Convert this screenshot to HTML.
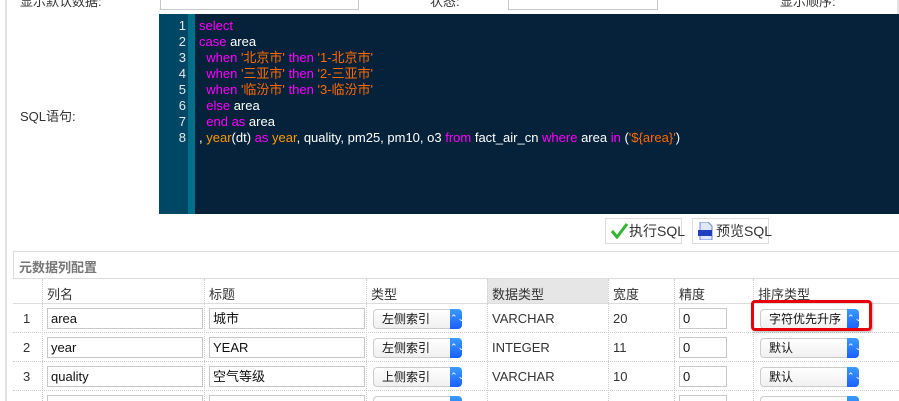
<!DOCTYPE html><html><head><meta charset="utf-8"><style>
*{margin:0;padding:0;box-sizing:border-box}
html,body{width:899px;height:401px;overflow:hidden}
body{background:#fff;position:relative;font-family:"Liberation Sans","Noto Sans CJK SC",sans-serif;font-size:13px;color:#333}
.a{position:absolute;white-space:nowrap}
.ed{left:159px;top:14px;width:740px;height:200px;background:#06223a}
.gut{left:159px;top:14px;width:29px;height:200px;background:#004766}
.bar{left:188px;top:14px;width:7px;height:200px;background:#00708a}
.ln{position:absolute;left:159px;width:27px;text-align:right;color:#e8e8e8;font-size:13px;line-height:16px}
.cl{position:absolute;left:199px;color:#fff;font-size:13px;line-height:16px;white-space:pre}
.k{color:#ff00ff}.s{color:#ff6a00}.f{color:#ff9900}
.btn{border:1px solid #ddd;background:#fff;height:26px;top:218px;font-size:14px;color:#333;line-height:24px}
.inp{border:1px solid #c8c8c8;height:21px;background:#fff;font-size:13px;line-height:19px;padding-left:3px;color:#111}
.sel{border:1px solid #ccc;border-radius:4px;height:20px;background:linear-gradient(#fff,#f0f0f0);font-size:12px;line-height:18px;padding-left:8px;color:#111}
.sel i{position:absolute;right:-1px;top:-1px;width:12px;height:20px;background:linear-gradient(#3a9bff,#1a5fff);border-radius:0 4px 4px 0;color:#fff;font-style:normal;font-size:9px;text-align:center;line-height:18px}
.hl{height:1px;background:#ddd;left:13px;width:886px}
.vd{width:0;border-left:1px dotted #ccc}
.hd{top:284px;font-size:13px;color:#333}
.cell{font-size:13px;color:#333}
</style></head><body>
<div class="a" style="left:5px;top:0;width:2px;height:401px;background:#e2e2e2"></div>
<div class="a" style="left:897px;top:0;width:2px;height:14px;background:#e2e2e2"></div>
<div class="a inp" style="left:160px;top:-12px;width:199px;height:22px"></div>
<div class="a" style="left:20px;top:-9px;font-size:13px">显示默认数据:</div>
<div class="a" style="left:430px;top:-9px;font-size:13px">状态:</div>
<div class="a inp" style="left:508px;top:-12px;width:150px;height:22px"></div>
<div class="a" style="left:780px;top:-9px;font-size:13px">显示顺序:</div>
<div class="a" style="left:20px;top:106px;font-size:13px">SQL语句:</div>
<div class="a ed"></div><div class="a gut"></div><div class="a bar"></div>
<div class="ln" style="top:18px">1</div><div class="ln" style="top:34px">2</div><div class="ln" style="top:50px">3</div><div class="ln" style="top:66px">4</div><div class="ln" style="top:82px">5</div><div class="ln" style="top:98px">6</div><div class="ln" style="top:114px">7</div><div class="ln" style="top:130px">8</div>
<div class="cl" style="top:18px"><span class="k">select</span></div>
<div class="cl" style="top:34px"><span class="k">case</span> area</div>
<div class="cl" style="top:50px">  <span class="k">when</span> <span class="s">'北京市'</span> <span class="k">then</span> <span class="s">'1-北京市'</span></div>
<div class="cl" style="top:66px">  <span class="k">when</span> <span class="s">'三亚市'</span> <span class="k">then</span> <span class="s">'2-三亚市'</span></div>
<div class="cl" style="top:82px">  <span class="k">when</span> <span class="s">'临汾市'</span> <span class="k">then</span> <span class="s">'3-临汾市'</span></div>
<div class="cl" style="top:98px">  <span class="k">else</span> area</div>
<div class="cl" style="top:114px">  <span class="k">end</span> <span class="k">as</span> area</div>
<div class="cl" style="top:130px">, <span class="f">year</span>(dt) <span class="k">as</span> <span class="f">year</span>, quality, pm25, pm10, o3 <span class="k">from</span> fact_air_cn <span class="k">where</span> area <span class="k">in</span> (<span class="s">'${area}'</span>)</div>
<div class="a btn" style="left:605px;width:77px"><svg class="a" style="left:4px;top:4px" width="18" height="16" viewBox="0 0 18 16"><path d="M2 8 L7 14 L17 1" stroke="#2fb52f" stroke-width="3" fill="none"/></svg><span class="a" style="left:23px;top:0">执行SQL</span></div>
<div class="a btn" style="left:692px;width:77px"><svg class="a" style="left:5px;top:3px" width="15" height="18" viewBox="0 0 15 18"><path d="M2 0h8l4 4v14H2z" fill="#dfe8ff" stroke="#6a8adf"/><rect x="0" y="8" width="14" height="6" fill="#2040c0"/></svg><span class="a" style="left:23px;top:0">预览SQL</span></div>
<div class="a hl" style="top:251px"></div>
<div class="a" style="left:13px;top:251px;width:886px;height:28px;border:1px solid #ddd;border-right:none"></div>
<div class="a" style="left:19px;top:257px;font-size:13px;font-weight:bold;color:#777">元数据列配置</div>
<div class="a" style="left:487px;top:279px;width:121px;height:24px;background:#e6e6e6"></div>
<div class="a hd" style="left:47px">列名</div><div class="a hd" style="left:209px">标题</div><div class="a hd" style="left:371px">类型</div><div class="a hd" style="left:492px">数据类型</div><div class="a hd" style="left:613px">宽度</div><div class="a hd" style="left:679px">精度</div><div class="a hd" style="left:758px">排序类型</div>
<div class="a hl" style="top:303px;background:none;border-top:1px solid #ddd"></div>
<div class="a hl" style="top:332px;background:none;border-top:1px dotted #ccc"></div>
<div class="a hl" style="top:361px;background:none;border-top:1px dotted #ccc"></div>
<div class="a hl" style="top:390px;background:none;border-top:1px dotted #ccc"></div>
<div class="a vd" style="left:42px;top:279px;height:122px"></div>
<div class="a vd" style="left:204px;top:279px;height:122px"></div>
<div class="a vd" style="left:366px;top:279px;height:122px"></div>
<div class="a vd" style="left:487px;top:279px;height:122px"></div>
<div class="a vd" style="left:608px;top:279px;height:122px"></div>
<div class="a vd" style="left:674px;top:279px;height:122px"></div>
<div class="a vd" style="left:753px;top:279px;height:122px"></div>
<div class="a cell" style="left:23px;top:311px">1</div>
<div class="a inp" style="left:47px;top:308px;width:156px">area</div>
<div class="a inp" style="left:209px;top:308px;width:156px">城市</div>
<div class="a sel" style="left:373px;top:309px;width:89px">左侧索引<i>⌃⌄</i></div>
<div class="a cell" style="left:492px;top:311px">VARCHAR</div>
<div class="a cell" style="left:613px;top:311px">20</div>
<div class="a inp" style="left:679px;top:308px;width:48px">0</div>
<div class="a sel" style="left:760px;top:309px;width:99px">字符优先升序<i>⌃⌄</i></div>
<div class="a" style="left:751px;top:300px;width:121px;height:31px;border:3px solid #e8000a;border-radius:4px;box-shadow:1px 1px 2px rgba(0,0,0,.3)"></div>
<div class="a cell" style="left:23px;top:340px">2</div>
<div class="a inp" style="left:47px;top:337px;width:156px">year</div>
<div class="a inp" style="left:209px;top:337px;width:156px">YEAR</div>
<div class="a sel" style="left:373px;top:338px;width:89px">左侧索引<i>⌃⌄</i></div>
<div class="a cell" style="left:492px;top:340px">INTEGER</div>
<div class="a cell" style="left:613px;top:340px">11</div>
<div class="a inp" style="left:679px;top:337px;width:48px">0</div>
<div class="a sel" style="left:760px;top:338px;width:99px">默认<i>⌃⌄</i></div>
<div class="a cell" style="left:23px;top:369px">3</div>
<div class="a inp" style="left:47px;top:366px;width:156px">quality</div>
<div class="a inp" style="left:209px;top:366px;width:156px">空气等级</div>
<div class="a sel" style="left:373px;top:367px;width:89px">上侧索引<i>⌃⌄</i></div>
<div class="a cell" style="left:492px;top:369px">VARCHAR</div>
<div class="a cell" style="left:613px;top:369px">10</div>
<div class="a inp" style="left:679px;top:366px;width:48px">0</div>
<div class="a sel" style="left:760px;top:367px;width:99px">默认<i>⌃⌄</i></div>
<div class="a inp" style="left:47px;top:395px;width:156px"></div>
<div class="a inp" style="left:209px;top:395px;width:156px"></div>
<div class="a sel" style="left:373px;top:396px;width:89px"><i></i></div>
<div class="a inp" style="left:679px;top:395px;width:48px"></div>
<div class="a sel" style="left:760px;top:396px;width:99px"><i></i></div>
</body></html>
